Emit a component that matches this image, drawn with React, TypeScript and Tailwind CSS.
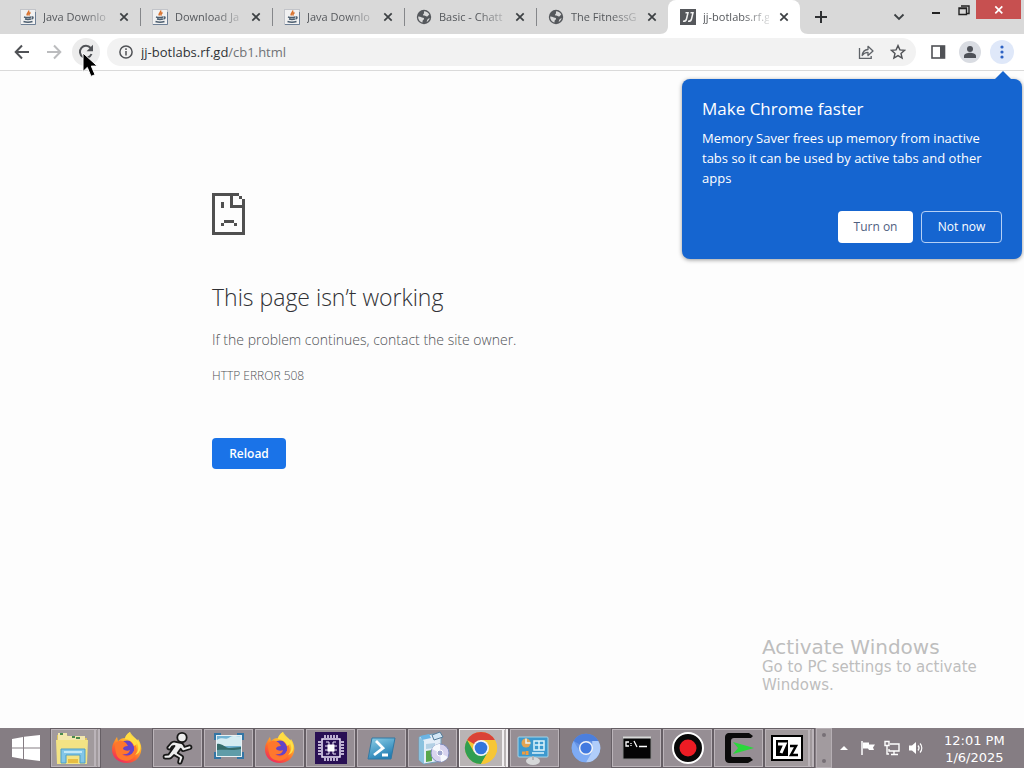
import type { ReactNode } from "react";

const uiFont = "font-['Open_Sans','Noto_Sans',sans-serif]";
const systemFont = "font-['DejaVu_Sans',sans-serif]";

function JavaIcon() {
  return (
    <svg viewBox="0 0 16 16" className="size-4 shrink-0" aria-hidden="true">
      <rect x=".5" y=".5" width="15" height="15" fill="#f1f1f1" stroke="#c2c4c9" />
      <path d="M1 15.5h14.5V3" fill="none" stroke="#6d7f95" />
      <path d="M8.5 1.5c1.500 2-3 2.500-1 5M10.500 3.500c-2 1.200-2 2-1 3" fill="none" stroke="#d9712c" strokeWidth="1.500" />
      <path d="M4 8c2 .7 5 .7 7 0M5 10c2 .6 4 .6 6 0M3.500 12.500c3 1 6 1 9 0M11.500 8c2-.5 2 1.500 0 2" fill="none" stroke="#4d5f70" strokeWidth="1.500" />
    </svg>
  );
}

function GlobeIcon() {
  return (
    <svg viewBox="0 0 16 16" className="size-4 shrink-0" aria-hidden="true">
      <circle cx="8" cy="8" r="7.200" fill="#55585c" />
      <path d="M2.200 7.500c2-.3 3 1.200 4.800 1.200 1.500 0 1.300 1.600.2 2.300-.8.500-.6 1.600-.7 2.600C4 13 2 10.500 2.200 7.500zM8 2.200c2.500 0 4.500 1.500 5.300 3.500-1 .2-1.200 1.600-2.300 1.800-1.200.2-1.500-1-2.800-.9C7 6.700 6.600 5.500 7.500 5c.9-.4.300-1.700.5-2.800zM13.600 9c-.3 1.800-1.400 3.200-2.900 4 .2-1.800.8-3.200 2.900-4z" fill="#d9d9d9" />
    </svg>
  );
}

function JjIcon() {
  return (
    <svg viewBox="0 0 16 16" className="size-4 shrink-0" aria-hidden="true">
      <rect width="16" height="16" fill="#55575b" />
      <path d="M5.500 3.700H8L6.500 10c-.4 1.800-1.500 2.500-3.500 2.300M10.500 3.700H13L11.500 10c-.4 1.800-1.500 2.500-3.500 2.300" fill="none" stroke="#f2f2f2" strokeWidth="1.500" />
    </svg>
  );
}

function CloseIcon() {
  return (
    <svg viewBox="0 0 10 10" className="size-2.5" aria-hidden="true">
      <path d="M1.300 1.300l7.400 7.400M8.700 1.300L1.300 8.700" stroke="#3c4043" strokeWidth="1.700" />
    </svg>
  );
}

const tabs: { icon: ReactNode; title: string; active?: boolean; last?: boolean }[] = [
  { icon: <JavaIcon />, title: "Java Downlo" },
  { icon: <JavaIcon />, title: "Download Ja" },
  { icon: <JavaIcon />, title: "Java Downlo" },
  { icon: <GlobeIcon />, title: "Basic - Chatt" },
  { icon: <GlobeIcon />, title: "The FitnessG", last: true },
  { icon: <JjIcon />, title: "jj-botlabs.rf.g", active: true },
];

function TabStrip() {
  return (
    <div className="flex h-[34px] shrink-0 bg-[#d9d9d9] pl-2">
      <div role="tablist" className="flex min-w-0">
        {tabs.map((tab, i) => (
          <div
            key={i}
            role="tab"
            aria-selected={!!tab.active}
            className={
              "relative flex h-[34px] w-[132px] shrink items-center gap-[7px] pr-2 pl-3 " +
              (tab.active ? "rounded-t-lg bg-white" : "")
            }
          >
            {tab.icon}
            <span className="min-w-0 flex-1 text-[11px] leading-5 whitespace-nowrap text-[#55585c] [mask-image:linear-gradient(to_right,#000_60%,transparent_110%)]">
              {tab.title}
            </span>
            <button type="button" aria-label="Close tab" className="flex size-4 shrink-0 items-center justify-center">
              <CloseIcon />
            </button>
            {!tab.active && !tab.last && <span className="absolute top-2 -right-px h-[18px] w-px bg-[#85878a]" />}
            {tab.active && (
              <svg viewBox="0 0 148 8" className="pointer-events-none absolute bottom-0 -left-2 h-2 w-[148px]" aria-hidden="true">
                <path d="M0 8c5 0 8-3 8-8v8zM148 8c-5 0-8-3-8-8v8z" fill="#fff" />
              </svg>
            )}
          </div>
        ))}
      </div>
      <button type="button" aria-label="New tab" className="flex w-[42px] shrink-0 items-center justify-center">
        <svg viewBox="0 0 12 12" className="size-3" aria-hidden="true">
          <path d="M6 0v12M0 6h12" stroke="#2f3133" strokeWidth="2" />
        </svg>
      </button>
      <div className="ml-auto flex shrink-0 items-start pr-[3px]">
        <button type="button" aria-label="Search tabs" className="flex h-[34px] w-8 items-center justify-center">
          <svg viewBox="0 0 12 8" className="h-2 w-3" aria-hidden="true">
            <path d="M1.500 1.500L6 6l4.500-4.500" fill="none" stroke="#3c4043" strokeWidth="1.800" />
          </svg>
        </button>
        <button type="button" aria-label="Minimize" className="flex h-[19px] w-9 items-center justify-center pl-1.5">
          <svg viewBox="0 0 10 10" className="size-2.5" aria-hidden="true">
            <path d="M1 8h8" stroke="#222" strokeWidth="2" />
          </svg>
        </button>
        <button type="button" aria-label="Restore" className="flex h-[19px] w-[25px] items-center justify-center">
          <svg viewBox="0 0 12 12" className="size-3" aria-hidden="true">
            <path d="M1 4h7.500v6.500H1zM1 4.500h7.500M3 2h8v7.500H9" fill="none" stroke="#222" strokeWidth="1.400" />
          </svg>
        </button>
        <button type="button" aria-label="Close window" className="flex h-[19px] w-[45px] items-center justify-center bg-[#c75050]">
          <svg viewBox="0 0 10 10" className="size-2.5" aria-hidden="true">
            <path d="M1.300 1.300l7 7M8.300 1.300l-7 7" stroke="#fff" strokeWidth="1.700" />
          </svg>
        </button>
      </div>
    </div>
  );
}

function Toolbar() {
  return (
    <div className="relative flex h-[37px] shrink-0 items-center border-b border-[#dadada] bg-white pr-2.5 pl-1.5">
      <button type="button" aria-label="Back" className="flex size-8 shrink-0 items-center justify-center">
        <svg viewBox="0 0 16 16" className="size-4" aria-hidden="true">
          <path d="M15 8H2M8 1.500L1.700 8 8 14.500" fill="none" stroke="#505256" strokeWidth="2" />
        </svg>
      </button>
      <button type="button" aria-label="Forward" className="flex size-8 shrink-0 items-center justify-center">
        <svg viewBox="0 0 16 16" className="size-4" aria-hidden="true">
          <path d="M1 8h13M8 1.500L14.300 8 8 14.500" fill="none" stroke="#bbbcbe" strokeWidth="2" />
        </svg>
      </button>
      <button type="button" aria-label="Reload page" className="relative mx-0.5 flex size-7 shrink-0 items-center justify-center rounded-full bg-[#ececec]">
        <svg viewBox="0 0 16 16" className="size-4" aria-hidden="true">
          <path d="M13.500 10A6 6 0 1 1 12.600 4" fill="none" stroke="#505256" strokeWidth="2" />
          <path d="M15 .8v6.400H8.600z" fill="#505256" />
        </svg>
        <svg viewBox="0 0 16 26" className="absolute top-3.5 left-2.5 z-10 h-[26px] w-4" aria-hidden="true">
          <path d="M1 1v18.500l4.300-4.100 3.700 9 4-1.700-3.700-8.600h6z" fill="#000" stroke="#fff" />
        </svg>
      </button>
      <div className="ml-[5px] flex h-7 min-w-0 flex-1 items-center rounded-full bg-[#f2f2f2] pr-0.5 pl-3">
        <svg viewBox="0 0 14 14" className="size-3.5 shrink-0" aria-hidden="true">
          <circle cx="7" cy="7" r="6.100" fill="none" stroke="#505256" strokeWidth="1.500" />
          <path d="M7 6v4.500M7 3.300V5" stroke="#505256" strokeWidth="1.500" />
        </svg>
        <a href="#cb1" className="ml-2 flex-1 truncate text-[13px] leading-5 text-[#303236]">
          jj-botlabs.rf.gd<span className="text-[#707276]">/cb1.html</span>
        </a>
        <button type="button" aria-label="Share this page" className="flex size-8 shrink-0 items-center justify-center">
          <svg viewBox="0 0 16 16" className="size-4" aria-hidden="true">
            <path d="M1.500 4v10.300h11.700V12" fill="none" stroke="#5f6368" strokeWidth="1.300" />
            <path d="M4.200 11.500c.5-4 2.500-5.800 5.800-6V2.300L15 7l-5 4.500V8.300c-2.600 0-4.300.8-5.800 3.200z" fill="none" stroke="#5f6368" strokeWidth="1.300" strokeLinejoin="round" />
          </svg>
        </button>
        <button type="button" aria-label="Bookmark this tab" className="flex size-8 shrink-0 items-center justify-center">
          <svg viewBox="0 0 16 16" className="size-4" aria-hidden="true">
            <path d="M8 1.600l1.900 4.300 4.700.4-3.600 3.100 1.100 4.700L8 11.600l-4.100 2.500L5 9.400 1.400 6.300l4.700-.4z" fill="none" stroke="#505256" strokeWidth="1.400" />
          </svg>
        </button>
      </div>
      <button type="button" aria-label="Side panel" className="ml-1.5 flex size-8 shrink-0 items-center justify-center">
        <svg viewBox="0 0 16 14" className="h-3.5 w-4" aria-hidden="true">
          <rect x="2" y="1" width="12.500" height="12" fill="none" stroke="#505256" strokeWidth="1.600" />
          <path d="M10 1h5v12h-5z" fill="#505256" />
        </svg>
      </button>
      <button type="button" aria-label="Profile" className="mx-[5px] flex size-[22px] shrink-0 items-center justify-center rounded-full bg-[#d9dce2]">
        <svg viewBox="0 0 14 14" className="size-3.5" aria-hidden="true">
          <circle cx="7" cy="4" r="3" fill="#4e5158" />
          <path d="M1 13v-2c0-2.500 3.500-3.300 6-3.300s6 .8 6 3.300v2z" fill="#4e5158" />
        </svg>
      </button>
      <button type="button" aria-label="Chrome menu" className="ml-1 flex size-6 shrink-0 items-center justify-center rounded-full bg-[#dfe8f9]">
        <svg viewBox="0 0 4 14" className="h-3.5 w-1" aria-hidden="true">
          <circle cx="2" cy="2" r="1.600" fill="#2d62c4" />
          <circle cx="2" cy="7" r="1.600" fill="#2d62c4" />
          <circle cx="2" cy="12" r="1.600" fill="#2d62c4" />
        </svg>
      </button>
      <MemoryPrompt />
    </div>
  );
}

function MemoryPrompt() {
  return (
    <section
      aria-label="Make Chrome faster"
      className="absolute top-[45px] right-0.5 z-20 w-[340px] rounded-lg bg-[#1565d0] px-5 pt-[18px] pb-4 text-white shadow-[0_1px_4px_rgba(0,0,0,0.4)]"
    >
      <svg viewBox="0 0 18 9" className="absolute -top-2 right-2.5 h-[9px] w-[18px]" aria-hidden="true">
        <path d="M0 9l9-9 9 9z" fill="#1565d0" />
      </svg>
      <h2 className="text-[17px] leading-6">Make Chrome faster</h2>
      <p className="mt-[7px] text-[13px] leading-5">
        Memory Saver frees up memory from inactive
        <br />
        tabs so it can be used by active tabs and other
        <br />
        apps
      </p>
      <div className="mt-[23px] flex justify-end gap-2">
        <button type="button" className="h-8 w-[75px] rounded bg-white text-[12px] text-[#4f607f]">
          Turn on
        </button>
        <button type="button" className="h-8 w-[81px] rounded border border-[#b5d0f5] text-[12px] font-medium">
          Not now
        </button>
      </div>
    </section>
  );
}

function SadPage() {
  return (
    <svg viewBox="0 0 33 42" className="h-[42px] w-[33px]" shapeRendering="crispEdges" aria-hidden="true">
      <path
        d="M0 0h27v3h-6v9h12v30H0zM3 3v36h27V15H18V3zM27 3h3v3h-3zM30 6h3v6h-3zM9 9h3v6H9zM12 27h10v3H12zM9 30h3v3H9zM22 30h3v3h-3z"
        fill="#505050"
        fillRule="evenodd"
      />
    </svg>
  );
}

function ExplorerIcon() {
  return (
    <svg viewBox="0 0 36 36" className="size-9" aria-hidden="true">
      <path d="M2 5h10l2 3h18v26H2z" fill="#dfc45c" />
      <path d="M3 3h9v3h18v5H3z" fill="#f2e7ac" />
      <path d="M5 4h3M17 7h3M21 8h4" stroke="#4b8a4d" strokeWidth="2" />
      <path d="M1 10h32l-1 24H2z" fill="#f3e384" />
      <path d="M6 33V19h24v14h-5v-8H11v8z" fill="#82c6e7" stroke="#4f9fc6" />
      <path d="M9 22h18" stroke="#c3e8f6" strokeWidth="2" />
      <path d="M13 33v-4h10v4z" fill="#e7bd42" />
    </svg>
  );
}

function FirefoxIcon() {
  return (
    <svg viewBox="0 0 36 36" className="size-9" aria-hidden="true">
      <defs>
        <linearGradient id="fox" x1=".8" y1="0" x2=".25" y2="1">
          <stop offset="0" stopColor="#fff04f" />
          <stop offset=".35" stopColor="#ffb52b" />
          <stop offset=".65" stopColor="#ff6a2b" />
          <stop offset="1" stopColor="#ed2862" />
        </linearGradient>
      </defs>
      <path d="M5 12c1-2 2-4 3-5l1 4c2-2 4-3 7-3 1-3 3-5 5-6 0 4 5 6 7 9l1-2c3 4 4 9 3 13-2 7-7 11-14 11C9 33 3 27 3 20c0-3 .500-6 2-8z" fill="url(#fox)" />
      <circle cx="18" cy="18" r="7.500" fill="#6544c8" />
      <path d="M6 14c3-4 7-4 11-1l2 3c-3 0-5 1-5 3 2 2 5 2 7 1-1 4-4 5-8 4 3 4 10 3 12-3 1-4-1-7-4-10 7 2 9 11 4 16-5 6-14 4-17-1-1-3-2-6-2-12z" fill="#ff772d" />
      <path d="M21 2c0 5 7 7 8 14 1 4-1 7-3 9 6-2 7-9 3-14-2-3-6-5-8-9z" fill="#ffe14a" />
      <path d="M21 2c-3 2-5 4-5 7 4 0 8 3 9 7l3-2c0-5-7-7-7-12z" fill="#ffdd43" />
    </svg>
  );
}

function RunnerIcon() {
  return (
    <svg viewBox="0 0 36 36" className="size-9" aria-hidden="true">
      <circle cx="22" cy="7.500" r="4.700" fill="#eee" stroke="#181818" strokeWidth="1.800" />
      <path
        d="M11 13c1-1 2-1.500 3.500-1.300l7 1.300c1 .2 1.500.8 2 1.800l1 2 5-1.400c2-.3 2.800 2.800.8 3.600l-6.500 2c-1 .3-1.800-.1-2.300-1l-.8-1.300-3 4.300 4.500 2.800c1 .7 1.200 1.500.8 2.600l-1.600 4.200c-.8 1.800-3.600 1-3.200-1l.8-3.600-5-3-2.500 2.600c-.7.700-1.500 1-2.500 1L5 28.500c-2-.2-2-3.400 0-3.600l3.500-.4 6-8.500-2.200.3-1.800 2.500c-1.300 1.500-3.700.2-3-1.700z"
        fill="#eee"
        stroke="#181818"
        strokeWidth="1.800"
        strokeLinejoin="round"
      />
    </svg>
  );
}

function PictureIcon() {
  return (
    <svg viewBox="0 0 36 36" className="size-9" aria-hidden="true">
      <path d="M5 5h26v22H5z" fill="#e8f1f4" />
      <path d="M6 6h24v20H6z" fill="#71b3d3" />
      <path d="M6 10c6-4 9 1 13-3 3-2 6 0 11-1v10H6z" fill="#d6ecf2" />
      <path d="M6 14c5-1 8 4 12 4l12-1v3H6z" fill="#356c6b" />
      <path d="M6 20c8-1 15 1 24-1v7H6z" fill="#5f9ca8" />
      <path d="M4 10V4h6M26 4h6v6M4 22v6h6M26 28h6v-6" fill="none" stroke="#3375a4" strokeWidth="2" />
    </svg>
  );
}

function ChipIcon() {
  return (
    <svg viewBox="0 0 32 32" className="size-8" aria-hidden="true">
      <path d="M0 0h32v32H0z" fill="#291054" />
      <g fill="none" stroke="#eee6fa" strokeWidth="1.500">
        <path d="M7 7h18v18H7z" />
        <path d="M10 3v3M13 3v3M16 3v3M19 3v3M22 3v3M10 26v3M13 26v3M16 26v3M19 26v3M22 26v3M3 10h3M3 13h3M3 16h3M3 19h3M3 22h3M26 10h3M26 13h3M26 16h3M26 19h3M26 22h3" />
        <path d="M14 13v-3h-3M18 13v-3h3M14 19v3h-3M18 19v3h3M10 14h3M10 18h3M19 14h3M19 18h3" strokeWidth="1" />
      </g>
      <path d="M12.500 12.500h7v7h-7z" fill="#fff" />
    </svg>
  );
}

function PowerShellIcon() {
  return (
    <svg viewBox="0 0 36 36" className="size-9" aria-hidden="true">
      <defs>
        <linearGradient id="ps" x1="0" y1="0" x2=".5" y2="1">
          <stop offset="0" stopColor="#8fd0e7" />
          <stop offset="1" stopColor="#247fb5" />
        </linearGradient>
      </defs>
      <path d="M8 8h23l-4 21H4z" fill="url(#ps)" stroke="#3179a4" />
      <path d="M12 11l7 7-9 7M18 25h6" fill="none" stroke="#fff" strokeWidth="2.800" />
    </svg>
  );
}

function InstallerIcon() {
  return (
    <svg viewBox="0 0 36 36" className="size-9" aria-hidden="true">
      <path d="M4 7l14-3 8 1v26l-17 3-5-4z" fill="#e4eef8" stroke="#71a0bb" />
      <path d="M4 7l5 4v23l-5-4z" fill="#8ac2df" />
      <path d="M11 21l6-1v11l-6 1z" fill="#58a74b" />
      <path d="M5 6l9-2 2 4-9 2z" fill="#6bb4e4" />
      <path d="M17 5l8-3 3 5-9 3z" fill="#d3e7f6" stroke="#547c9a" />
      <path d="M11 14l9-1v5l-9 1z" fill="#b2d0e4" />
      <circle cx="25" cy="23" r="9" fill="#d8d4ef" stroke="#7f8dbe" />
      <path d="M25 23l-8-4c2-4 5-5 8-5zM25 23l8 4c-2 3-4 4-7 5z" fill="#f6f9fd" />
      <circle cx="25" cy="23" r="3" fill="#9ea7ce" stroke="#fff" />
    </svg>
  );
}

function ChromeIcon({ blue = false }: { blue?: boolean }) {
  return (
    <svg viewBox="0 0 36 36" className={blue ? "size-8" : "size-9"} aria-hidden="true">
      <circle cx="18" cy="18" r="16" fill={blue ? "#6693e4" : "#f6c636"} />
      <path d="M18 18L4.100 10A16 16 0 0 1 31.900 10H18z" fill={blue ? "#4c7fdc" : "#da4337"} />
      <path d="M4.100 10A16 16 0 0 0 18 34l7-12-14 0z" fill={blue ? "#7eabf4" : "#2f9e50"} />
      <path d="M31.900 10A16 16 0 0 1 18 34l7-12V10z" fill={blue ? "#b0cdfa" : "#f6c636"} />
      <circle cx="18" cy="18" r="8" fill="#f2f4f7" />
      <circle cx="18" cy="18" r="6.300" fill={blue ? "#427ae0" : "#3275dd"} />
    </svg>
  );
}

function ControlPanelIcon() {
  return (
    <svg viewBox="0 0 36 36" className="mr-1 size-9" aria-hidden="true">
      <rect x="3" y="7" width="30" height="20" rx="1" fill="#3d99ce" stroke="#a5d5e8" />
      <circle cx="11" cy="13" r="4.500" fill="#e4a454" />
      <path d="M11 8.500V13h4.500" stroke="#e9f4f8" strokeWidth="1.500" fill="none" />
      <path d="M19 11h10v9H19zM24 11v9M20 15h9M17 23h12" stroke="#ddf3fc" strokeWidth="1.500" fill="none" />
      <path d="M7 23h3M12 21v4" stroke="#ef9c3f" strokeWidth="3" />
      <ellipse cx="18" cy="31" rx="7" ry="4" fill="#d6d8d9" />
      <path d="M17 26h2v4h-2z" fill="#b2b4b6" />
    </svg>
  );
}

function TerminalIcon() {
  return (
    <svg viewBox="0 0 30 24" className="h-6 w-[30px]" aria-hidden="true">
      <path d="M1 1h28v22H1z" fill="#050505" stroke="#888" />
      <path d="M1 1.500h28" stroke="#d8d8d8" strokeWidth="2" />
      <path d="M7 6H4v4h3M9 7v1M9 9v1M12 5l3 6M17 10.500h8" fill="none" stroke="#fff" strokeWidth="1.300" />
    </svg>
  );
}

function RecordIcon() {
  return (
    <svg viewBox="0 0 34 34" className="size-[34px]" aria-hidden="true">
      <circle cx="17" cy="17" r="15" fill="#080808" stroke="#fff" strokeWidth="2" />
      <circle cx="17" cy="17" r="8.500" fill="#ed1c24" />
    </svg>
  );
}

function CaptureIcon() {
  return (
    <svg viewBox="0 0 36 36" className="size-9" aria-hidden="true">
      <path d="M32 6l-4-3H9C5 3 4 5 4 8v20c0 4 2 5 5 5h18l5-3-3-3H13c-2 0-3 0-3-2V11c0-2 1-3 3-3h17z" fill="#0b0b0b" />
      <path d="M12 12l21 6-21 6 5-6z" fill="#29d83b" />
    </svg>
  );
}

function ArchiveIcon() {
  return (
    <svg viewBox="0 0 32 26" className="h-[26px] w-8" aria-hidden="true">
      <path d="M1 1h30v24H1z" fill="#fff" stroke="#000" strokeWidth="2" />
      <path d="M5 5h12v16H5z" />
      <path d="M7 9h7l-4 9" fill="none" stroke="#fff" strokeWidth="3" />
      <path d="M19 11h6l-5 9h7" fill="none" stroke="#000" strokeWidth="2.500" />
    </svg>
  );
}

const apps: { name: string; icon: ReactNode; frame: "plain" | "open" | "active" | "stack" }[] = [
  { name: "File Explorer", icon: <ExplorerIcon />, frame: "stack" },
  { name: "Firefox", icon: <FirefoxIcon />, frame: "plain" },
  { name: "AIM", icon: <RunnerIcon />, frame: "open" },
  { name: "Pictures", icon: <PictureIcon />, frame: "open" },
  { name: "Firefox window", icon: <FirefoxIcon />, frame: "open" },
  { name: "CPU monitor", icon: <ChipIcon />, frame: "open" },
  { name: "PowerShell", icon: <PowerShellIcon />, frame: "open" },
  { name: "Installer", icon: <InstallerIcon />, frame: "open" },
  { name: "Chrome", icon: <ChromeIcon />, frame: "active" },
  { name: "Control Panel", icon: <ControlPanelIcon />, frame: "open" },
  { name: "Chromium", icon: <ChromeIcon blue />, frame: "plain" },
  { name: "Command Prompt", icon: <TerminalIcon />, frame: "open" },
  { name: "Recorder", icon: <RecordIcon />, frame: "open" },
  { name: "Capture", icon: <CaptureIcon />, frame: "open" },
  { name: "7-Zip", icon: <ArchiveIcon />, frame: "stack" },
];

const frames = {
  plain: "",
  open: "border border-[#bbb4b9] bg-[#968e94] outline outline-[#665f65]",
  active: "border border-r-[6px] border-double border-[#f2eff1] bg-[#b9b4b5] outline outline-[#665f65]",
  stack: "border border-r-[6px] border-double border-[#bbb4b9] bg-[#a19a9d] outline outline-[#665f65]",
};

function Taskbar() {
  return (
    <footer className="flex h-10 shrink-0 items-stretch overflow-hidden bg-[#857d83]">
      <button type="button" aria-label="Start" className="flex w-[51px] shrink-0 items-center justify-center">
        <svg viewBox="0 0 28 26" className="h-[26px] w-7" aria-hidden="true">
          <path d="M0 4l11-2v10.500H0zM12 1.800L28 0v12.500H12zM0 13.500h11V24L0 22zM12 13.500h16V26l-16-2z" fill="#fff" />
        </svg>
      </button>
      <nav className="flex shrink-0 gap-0.5 py-px" aria-label="Running applications">
        {apps.map((app) => (
          <button
            key={app.name}
            type="button"
            aria-label={app.name}
            className={"flex w-[49px] items-center justify-center " + frames[app.frame]}
          >
            {app.icon}
          </button>
        ))}
      </nav>
      <div className="ml-0.5 flex w-4 shrink-0 flex-col items-center justify-between border border-[#b6afb4] bg-[#a29b9f] py-1">
        <span className="size-1 rounded-full bg-[#777076]" />
        <span className="size-1 rounded-full bg-[#777076]" />
      </div>
      <div className="ml-auto flex shrink-0 items-center">
        <button type="button" aria-label="Show hidden icons" className="flex size-6 items-center justify-center">
          <svg viewBox="0 0 8 4" className="h-1 w-2" aria-hidden="true">
            <path d="M0 4l4-4 4 4z" fill="#fff" />
          </svg>
        </button>
        <button type="button" aria-label="Action Center" className="flex size-6 items-center justify-center">
          <svg viewBox="0 0 16 16" className="size-4" aria-hidden="true">
            <path d="M2 1v14" stroke="#fff" strokeWidth="1.500" />
            <path d="M3 2.500h6v2h6l-2 3 1 2.500H9L8 8.500H3z" fill="#fff" />
          </svg>
        </button>
        <button type="button" aria-label="Network" className="flex size-6 items-center justify-center">
          <svg viewBox="0 0 16 16" className="size-4" aria-hidden="true">
            <path d="M6 4h9v7H5V9M10 11v3M7 14.500h7M1 1.500h4v4H1zM3 6v8h2" fill="none" stroke="#fff" strokeWidth="1.400" />
          </svg>
        </button>
        <button type="button" aria-label="Volume" className="flex size-6 items-center justify-center">
          <svg viewBox="0 0 16 16" className="size-4" aria-hidden="true">
            <path d="M1 5.500h3L8 2v12l-4-3.500H1z" fill="#fff" />
            <path d="M10 5.500c1.300 1.500 1.300 3.500 0 5M12 3.500c2.400 2.500 2.400 6.500 0 9" fill="none" stroke="#fff" strokeWidth="1.200" />
          </svg>
        </button>
        <time dateTime="2025-01-06T12:01" className={"mr-5 ml-4 pt-0.5 text-center text-[13px] leading-[17px] text-white " + systemFont}>
          12:01 PM
          <br />
          1/6/2025
        </time>
      </div>
    </footer>
  );
}

export default function App() {
  return (
    <div className={"flex min-h-screen flex-col bg-white " + uiFont}>
      <TabStrip />
      <Toolbar />
      <main className="relative flex-1 bg-[#fdfdfd]">
        <div className="mx-auto w-full max-w-[600px] pt-[122px]">
          <SadPage />
          <h1 className="mt-[46px] text-[23px] leading-8 font-light text-[#303134]">This page isn’t working</h1>
          <p className="mt-[15px] text-[14px] leading-6 font-light text-[#505256]">
            If the problem continues, contact the site owner.
          </p>
          <p className="mt-3 text-[12px] leading-6 font-light text-[#505256]">HTTP ERROR 508</p>
          <button type="button" className="mt-[50px] block h-[31px] w-[74px] rounded bg-[#1a73e8] text-[12px] font-semibold text-white">
            Reload
          </button>
        </div>
        <aside className={"absolute right-10 bottom-[34px] w-[222px] text-[#bebebe] " + systemFont}>
          <p className="text-[20px] leading-[22px]">Activate Windows</p>
          <p className="text-[15px] leading-[18px]">
            Go to PC settings to activate
            <br />
            Windows.
          </p>
        </aside>
      </main>
      <Taskbar />
    </div>
  );
}
